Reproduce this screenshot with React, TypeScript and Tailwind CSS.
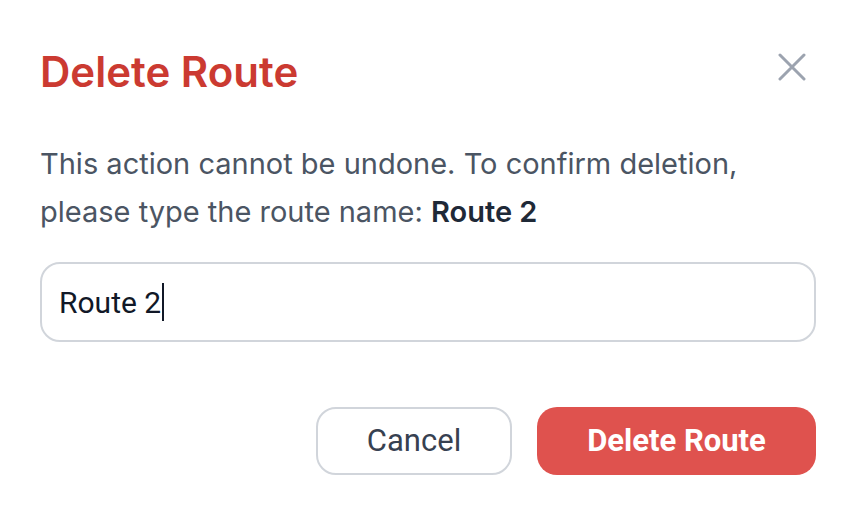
export default function App() {
  return (
    <div className="min-h-[506px] w-[864px] bg-white pl-[40px] pr-[48px] pt-[48px]" style={{ fontFamily: "Inter, sans-serif" }}>
      <div className="relative">
        <h1 className="text-[42px] leading-[48px] font-semibold text-[#cb3a31]">Delete Route</h1>
        <button type="button" className="absolute right-[10px] top-[5px] text-[#9ca3af]">
          <svg width="28" height="28" viewBox="0 0 28 28" fill="none" stroke="currentColor" strokeWidth="3" strokeLinecap="round">
            <path d="M2 2 26 26M26 2 2 26" />
          </svg>
        </button>
      </div>

      <p className="mt-[44px] text-[29px] leading-[48px] text-[#4b5563]">
        This action cannot be undone. To confirm deletion, please type the route name:{" "}
        <span className="font-semibold text-[#1f2937]">Route 2</span>
      </p>

      <div
        className="mt-[26px] flex h-[80px] items-center rounded-[20px] border-2 border-[#d1d5db] pl-[17px] text-[30px] text-[#111827]"
        style={{ fontFamily: "Roboto, sans-serif" }}
      >
        <span>Route 2</span>
        <span className="ml-[1px] h-[38px] w-[2px] bg-[#111827]" />
      </div>

      <div className="mt-[65px] flex justify-end gap-[25px]" style={{ fontFamily: "Roboto, sans-serif" }}>
        <button
          type="button"
          className="h-[68px] w-[196px] rounded-[20px] border-2 border-[#d1d5db] bg-white text-[31px] text-[#374151]"
        >
          Cancel
        </button>
        <button
          type="button"
          className="h-[68px] w-[279px] rounded-[20px] bg-[#df524e] text-[31px] font-bold text-white"
        >
          Delete Route
        </button>
      </div>
    </div>
  );
}
